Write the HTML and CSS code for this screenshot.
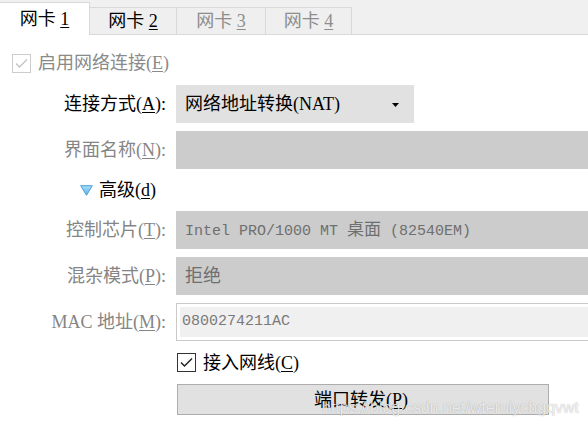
FILE: index.html
```html
<!DOCTYPE html>
<html lang="zh-CN">
<head>
<meta charset="utf-8">
<link rel="stylesheet" href="styles.css">
</head>
<body>
<div class="page">
  <div class="tabs">
    <div class="tab active w1"><span>网卡&nbsp;<u>1</u></span></div>
    <div class="tab w2"><span>网卡&nbsp;<u>2</u></span></div>
    <div class="tab disabled w3"><span>网卡&nbsp;<u>3</u></span></div>
    <div class="tab disabled w4"><span>网卡&nbsp;<u>4</u></span></div>
  </div>
  <div class="content">
    <div class="check-row top disabled">
      <svg class="box" width="19" height="19" viewBox="0 0 19 19"><rect x="0.5" y="0.5" width="18" height="18" fill="#fff" stroke="#cccccc"/><polyline points="4,9.5 7.5,13 15,5.5" fill="none" stroke="#c4c4c4" stroke-width="1.4"/></svg>
      <span>启用网络连接(<u>E</u>)</span>
    </div>
    <div class="form">
      <div class="label">连接方式(<u>A</u>):</div>
      <div class="select">
        <span>网络地址转换(NAT)</span>
        <svg class="arrow" width="7" height="4" viewBox="0 0 7 4"><polygon points="0,0 7,0 3.5,4" fill="#000"/></svg>
      </div>
      <div class="label dis">界面名称(<u>N</u>):</div>
      <div class="field"></div>
      <div class="advanced">
        <svg class="tri" width="13" height="11" viewBox="0 0 13 11"><defs><linearGradient id="g" x1="0" y1="0" x2="0" y2="1"><stop offset="0" stop-color="#a9dcf8"/><stop offset="1" stop-color="#5fb1e6"/></linearGradient></defs><polygon points="0.7,0.7 12.3,0.7 6.5,10.3" fill="url(#g)" stroke="#4b9fd9" stroke-width="1" stroke-linejoin="round"/></svg>
        <span>高级(<u>d</u>)</span>
      </div>
      <div class="label dis">控制芯片(<u>T</u>):</div>
      <div class="field mono"><span>Intel PRO/1000 MT <span class="cjk">桌面</span> (82540EM)</span></div>
      <div class="label dis">混杂模式(<u>P</u>):</div>
      <div class="field"><span>拒绝</span></div>
      <div class="label dis">MAC 地址(<u>M</u>):</div>
      <div class="input"><div class="input-inner mono"><span>0800274211AC</span></div></div>
      <div class="check-row cable">
        <svg class="box" width="19" height="19" viewBox="0 0 19 19"><rect x="0.5" y="0.5" width="18" height="18" fill="#fff" stroke="#333333"/><polyline points="4,9.5 7.5,13 15,5.5" fill="none" stroke="#222" stroke-width="1.5"/></svg>
        <span>接入网线(<u>C</u>)</span>
      </div>
      <div class="button"><span>端口转发(<u>P</u>)</span></div>
    </div>
  </div>
  <div class="watermark">https://blog.csdn.net/wteruiycbgqvwt</div>
</div>
</body>
</html>
```
FILE: styles.css
```css
html, body {
  margin: 0;
  padding: 0;
  background: #ffffff;
}
body {
  font-family: "Liberation Serif", "Noto Sans CJK SC", serif;
  font-size: 18px;
  line-height: 22px;
  color: #000;
}
.page {
  position: relative;
  width: 588px;
  height: 428px;
  overflow: hidden;
}
u {
  text-decoration: underline;
  text-underline-offset: 2px;
  text-decoration-thickness: 1px;
}
.tabs {
  display: flex;
  align-items: flex-end;
  height: 35px;
  background: #f0f0f0;
  border-bottom: 1px solid #d9d9d9;
  box-sizing: border-box;
}
.tab {
  box-sizing: border-box;
  height: 27px;
  display: flex;
  align-items: center;
  justify-content: center;
  border-top: 1px solid #d9d9d9;
  border-right: 1px solid #d9d9d9;
  background: #efefef;
  white-space: nowrap;
  padding-bottom: 1px;
}
.tab.active {
  height: 33px;
  margin-bottom: -1px;
  background: #ffffff;
  padding-bottom: 0;
}
.tab.disabled { color: #8d8d8d; }
.w1 { width: 90px; }
.w2 { width: 87px; }
.w3 { width: 89px; }
.w4 { width: 86px; }

.check-row {
  display: flex;
  align-items: center;
  gap: 7px;
}
.check-row .box { flex: none; display: block; }
.check-row.top {
  margin: 17px 0 0 12px;
  height: 22px;
}
.check-row.disabled { color: #8a8a8a; }

.form {
  margin-top: 11px;
  display: grid;
  grid-template-columns: 166px 412px;
  grid-template-rows: 38px 38px 26px 38px 38px 38px 27px 31px;
  column-gap: 10px;
  row-gap: 8px;
}
.label {
  grid-column: 1;
  align-self: center;
  text-align: right;
  white-space: nowrap;
}
.label.dis { color: #858585; }
.select {
  grid-column: 2;
  width: 238px;
  background: #e1e1e1;
  display: flex;
  align-items: center;
  justify-content: space-between;
  padding: 0 15px 0 9px;
  box-sizing: border-box;
}
.arrow { display: block; margin-top: 1px; }
.field {
  grid-column: 2;
  background: #cccccc;
  display: flex;
  align-items: center;
  padding-left: 9px;
  color: #6f6f6f;
  white-space: pre;
}
.mono {
  font-family: "Liberation Mono", "Noto Sans CJK SC", monospace;
  font-size: 15px;
}
.cjk {
  font-family: "Noto Sans CJK SC", sans-serif;
  font-size: 17px;
}
.advanced {
  grid-column: 1 / 3;
  display: flex;
  align-items: center;
  gap: 6px;
  padding-left: 80px;
}
.tri { display: block; }
.input {
  grid-column: 2;
  border: 1px solid #cacaca;
  border-right: none;
  padding: 3px 0 3px 3px;
  box-sizing: border-box;
  display: flex;
}
.input-inner {
  flex: 1;
  background: #f0f0f0;
  display: flex;
  align-items: center;
  padding-left: 2px;
  color: #7a7a7a;
}
.check-row.cable {
  grid-column: 2;
  padding-left: 1px;
}
.button {
  grid-column: 2;
  margin-left: 1px;
  width: 372px;
  box-sizing: border-box;
  background: #e1e1e1;
  border: 1px solid #adadad;
  display: flex;
  align-items: center;
  justify-content: center;
  padding-right: 4px;
}
.watermark {
  position: absolute;
  left: 322px;
  top: 397px;
  font-family: "Liberation Sans", sans-serif;
  font-size: 16px;
  line-height: 22px;
  color: rgba(255, 255, 255, 0.8);
  text-shadow: 0 0 1px rgba(0, 0, 0, 0.35);
  white-space: nowrap;
}
```
